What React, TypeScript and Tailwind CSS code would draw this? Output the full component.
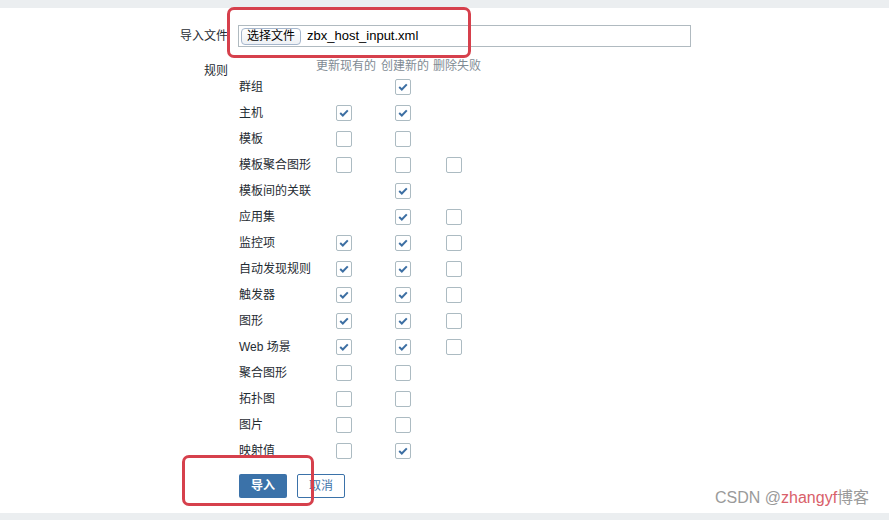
import React from "react";

type Cell = boolean | null;
const rows: [string, Cell, Cell, Cell][] = [
  ["群组", null, true, null],
  ["主机", true, true, null],
  ["模板", false, false, null],
  ["模板聚合图形", false, false, false],
  ["模板间的关联", null, true, null],
  ["应用集", null, true, false],
  ["监控项", true, true, false],
  ["自动发现规则", true, true, false],
  ["触发器", true, true, false],
  ["图形", true, true, false],
  ["Web 场景", true, true, false],
  ["聚合图形", false, false, null],
  ["拓扑图", false, false, null],
  ["图片", false, false, null],
  ["映射值", false, true, null],
];

function Box({ checked }: { checked: boolean }) {
  return (
    <span className="flex h-[16px] w-[16px] items-center justify-center rounded-[2px] border border-[#acbbc2] bg-white">
      {checked && (
        <svg width="10" height="8" viewBox="0 0 10 8">
          <path d="M1.2 4.1 L3.8 6.5 L8.8 1.4" fill="none" stroke="#3d6fa3" strokeWidth="2" />
        </svg>
      )}
    </span>
  );
}

export default function App() {
  const font = { fontFamily: '"Liberation Sans", "Noto Sans CJK SC", sans-serif' };
  return (
    <div className="relative flex h-[520px] w-[889px] flex-col overflow-hidden bg-white text-[12px] text-[#1f2c33]" style={font}>
      <div className="h-[8px] shrink-0 bg-[#ebeef0]" />
      <div className="flex-1 pt-[17px]">
        <div className="flex h-[22px] items-center">
          <div className="w-[228px] text-right leading-[14px]">导入文件</div>
          <div className="ml-[10px] flex h-[22px] w-[453px] items-center border border-[#b0bac0] pl-[2px]">
            <span className="flex h-[17px] items-center rounded-[4px] border border-[#a5b6cc] bg-gradient-to-b from-white to-[#eef1f5] px-[5px] text-[12px] leading-[14px] text-black">
              选择文件
            </span>
            <span className="ml-[6px] text-[13px] text-black">zbx_host_input.xml</span>
          </div>
        </div>
        <div className="mt-[12px] flex">
          <div className="w-[228px] pt-[5px] text-right leading-[14px]">规则</div>
          <div className="ml-[10px] flex flex-col">
            <div className="flex h-[14px] items-center leading-[14px] text-[#7f8b94]">
              <span className="ml-[78px]">更新现有的</span>
              <span className="ml-[5px]">创建新的</span>
              <span className="ml-[4px]">删除失败</span>
            </div>
            <div className="mt-[1px] flex flex-col">
              {rows.map(([label, a, b, c]) => (
                <div key={label} className="flex h-[26px] items-center pl-[1px]">
                  <div className="w-[97px] leading-[14px]">{label}</div>
                  <div className="w-[59px]">{a !== null && <Box checked={a} />}</div>
                  <div className="w-[51px]">{b !== null && <Box checked={b} />}</div>
                  <div className="w-[20px]">{c !== null && <Box checked={c} />}</div>
                </div>
              ))}
            </div>
            <div className="ml-[1px] mt-[10px] flex gap-[10px]">
              <button className="h-[24px] w-[48px] rounded-[2px] bg-[#3b72a9] text-[12px] font-bold text-white">导入</button>
              <button className="h-[24px] w-[48px] rounded-[2px] border border-[#3b72a9] bg-white text-[12px] text-[#3b72a9]">取消</button>
            </div>
          </div>
        </div>
      </div>
      <div className="h-[7px] shrink-0 bg-[#ebeef0]" />

      <div className="pointer-events-none absolute left-[227px] top-[7px] h-[51px] w-[244px] rounded-[7px] border-[3px] border-[#d6404c]" />
      <div className="pointer-events-none absolute left-[182px] top-[455px] h-[51px] w-[132px] rounded-[7px] border-[3px] border-[#d6404c]" />

      <div className="pointer-events-none absolute left-[715px] top-[488px] whitespace-nowrap text-[16px] leading-[20px] text-[#9a9a9a]">
        CSDN @<span className="text-[#d9606a]">zhangyf</span>博客
      </div>
    </div>
  );
}
